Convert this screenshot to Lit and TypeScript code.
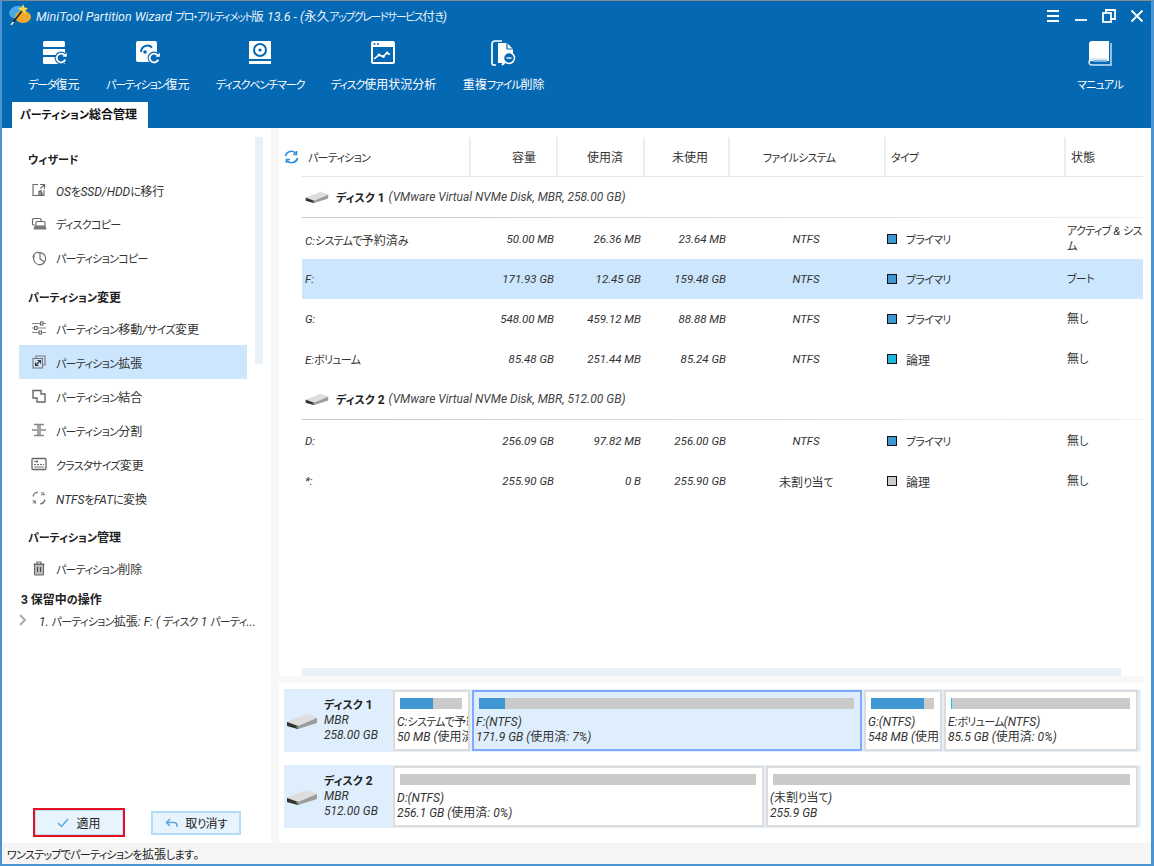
import { LitElement, html, css, svg } from "lit";
import { customElement } from "lit/decorators.js";

// kana is set narrower than kanji, like the UI font of the app
const kana = (s: string) =>
  s.split(/([\u3040-\u30ff]+)/).map((p, i) => (i % 2 ? html`<span class="k">${p}</span>` : p));
// latin runs are italic in this app, the japanese stays upright
const jp = (s: string) =>
  s.split(/([\x20-\x7e]+)/).map((p, i) => (i % 2 ? html`<i>${p}</i>` : kana(p)));

const tb = (body: unknown, w = 26, h = 26) =>
  html`<svg width=${w} height=${h} viewBox="0 0 26 26">${body}</svg>`;
const side = (body: unknown) =>
  html`<svg class="ic" width="16" height="16" viewBox="0 0 16 16" fill="none" stroke="#666" stroke-width="1.1">${body}</svg>`;

const redo = (x: number, y: number) => svg`
  <circle cx=${x} cy=${y} r="6.4" fill="#0568b3"/>
  <path d="M${x + 3.6} ${y - 2.6}A4.4 4.4 0 1 0 ${x + 4.2} ${y + 1.6}" fill="none" stroke="#fff" stroke-width="1.9"/>
  <path d="M${x + 1.6} ${y - 1.2}h4.2v-4z" fill="#fff"/>`;

const toolbar = [
  {
    label: "データ復元",
    icon: tb(svg`
      <rect x="2" y="1" width="22" height="6" rx="1.5" fill="#fff"/>
      <rect x="2" y="9" width="22" height="6" fill="#fff"/>
      <rect x="2" y="17" width="22" height="7" rx="1" fill="#fff"/>
      ${redo(20, 18)}`),
  },
  {
    label: "パーティション復元",
    icon: tb(svg`
      <rect x="1" y="1" width="21" height="21" rx="2" fill="#fff"/>
      <path d="M6 12a6.500 6.500 0 0 1 11-4.500" fill="none" stroke="#0568b3" stroke-width="2"/>
      <circle cx="10" cy="12" r="1.800" fill="#0568b3"/>
      ${redo(19, 18)}`),
  },
  {
    label: "ディスクベンチマーク",
    icon: tb(svg`
      <path d="M3 1h20a1 1 0 0 1 1 1v17H2V2a1 1 0 0 1 1-1z" fill="#fff"/>
      <circle cx="13" cy="10" r="6" fill="none" stroke="#0568b3" stroke-width="2"/>
      <circle cx="13" cy="10" r="1.600" fill="#0568b3"/>
      <rect x="2" y="21" width="22" height="3" fill="#fff"/>`),
  },
  {
    label: "ディスク使用状況分析",
    icon: tb(svg`
      <rect x="1" y="1" width="24" height="23" rx="2" fill="#fff"/>
      <rect x="3" y="7" width="20" height="15" fill="#0568b3"/>
      <circle cx="4.500" cy="4" r="1" fill="#0568b3"/><circle cx="8" cy="4" r="1" fill="#0568b3"/>
      <path d="M4 19l5-4 4 1.500 4-3.500 3 1.500" fill="none" stroke="#fff" stroke-width="1.600"/>
      <circle cx="9" cy="15" r="1.400" fill="#fff"/><circle cx="13.500" cy="16.500" r="1.400" fill="#fff"/><circle cx="17" cy="13" r="1.400" fill="#fff"/>`),
  },
  {
    label: "重複ファイル削除",
    icon: tb(svg`
      <path d="M5 25H3a2 2 0 0 1-2-2V4a3 3 0 0 1 3-3h7" fill="none" stroke="#fff" stroke-width="1.700"/>
      <path d="M7 3h9l6 6v14H7z" fill="#fff"/>
      <path d="M16 3v6h6" fill="none" stroke="#0568b3" stroke-width="1.200"/>
      <circle cx="18" cy="18" r="5.500" fill="#0568b3" stroke="#fff" stroke-width="1.500"/>
      <path d="M15.500 18h5" stroke="#fff" stroke-width="1.400"/>
      <path d="M14 22l-3 3" stroke="#fff" stroke-width="2"/>`),
  },
];

const groups = [
  {
    title: "ウィザード",
    items: [
      { label: "OSをSSD/HDDに移行", icon: side(svg`<path d="M7 2.500H2v11h11V8"/><path d="M9 2.500h4.500V7M13 3L9.500 6.500"/><path d="M8 13V9.500l2-.5v4M11 13v-2.500" stroke-width="1.400"/>`) },
      { label: "ディスクコピー", icon: side(svg`<path d="M4 9H2.500a1 1 0 0 1-1-1V3.500a1 1 0 0 1 1-1H9a1 1 0 0 1 1 1V5"/><path d="M6 5.500h7a1 1 0 0 1 1 1V10H5V6.500a1 1 0 0 1 1-1z"/><path d="M3.500 10h11l1 3.500H2.500z" fill="#777" stroke="none"/>`) },
      { label: "パーティションコピー", icon: side(svg`<path d="M3.500 5.500A6 6 0 1 0 6.500 3"/><path d="M9 9V3.200M9 9l4.500 3"/><path d="M2 8a6 6 0 0 1 5-6"/>`) },
    ],
  },
  {
    title: "パーティション変更",
    items: [
      { label: "パーティション移動/サイズ変更", icon: side(svg`<path d="M1 3.500h14M1 8h14M1 12.500h14" stroke="#888"/><rect x="9.500" y="2" width="2.500" height="3" fill="#fff"/><rect x="3.500" y="6.500" width="2.500" height="3" fill="#fff"/><rect x="8" y="11" width="2.500" height="3" fill="#fff"/>`) },
      { label: "パーティション拡張", sel: true, icon: side(svg`<path d="M5 4.500V2h9v9h-2.500" stroke="#777"/><rect x="2" y="4.500" width="9.500" height="9.500" stroke="#777"/><path d="M5 11l4-4M6.500 6.500H9.500V9.500M4.500 8.500v3h3" stroke="#333"/>`) },
      { label: "パーティション結合", icon: side(svg`<path d="M2 2.500h8v3.500h4v8H6v-4H2z" stroke-width="1.400"/>`) },
      { label: "パーティション分割", icon: side(svg`<path d="M3 2.500h10M3 13.500h10M1 8h5M10 8h5M7 2.500v11M9 2.500v11" stroke="#888" stroke-width="1.500"/>`) },
      { label: "クラスタサイズ変更", icon: side(svg`<rect x="1" y="2.500" width="14" height="11" rx="1" stroke-width="1.300"/><path d="M3 8.500h10" stroke-dasharray="2 1"/><path d="M3 5.500h4M6 4v3M3 11h10" stroke="#777"/>`) },
      { label: "NTFSをFATに変換", icon: side(svg`<path d="M2 6.500A6 6 0 0 1 7 2M14 9.500A6 6 0 0 1 9 14"/><path d="M12 3.500l1.500 1.500M3 11l1.500 1.500"/><text x="10" y="6" font-size="5" font-family="Liberation Sans" fill="#555" stroke="none">F</text><text x="1.500" y="14" font-size="5" font-family="Liberation Sans" fill="#555" stroke="none">N</text>`) },
    ],
  },
  {
    title: "パーティション管理",
    items: [
      { label: "パーティション削除", icon: side(svg`<path d="M2.500 4h11M6 4V2h4v2"/><path d="M3.500 4.500h9V14a1 1 0 0 1-1 1h-7a1 1 0 0 1-1-1z" fill="#bbb"/><path d="M6.500 7v5M9.500 7v5" stroke="#444"/>`) },
    ],
  },
];

const table = [
  { disk: "ディスク 1", info: "(VMware Virtual NVMe Disk, MBR, 258.00 GB)" },
  { name: "C:システムで予約済み", size: "50.00 MB", used: "26.36 MB", free: "23.64 MB", fs: "NTFS", type: "プライマリ", color: "#3f98d4", state: "アクティブ & シス\nム" },
  { name: "F:", size: "171.93 GB", used: "12.45 GB", free: "159.48 GB", fs: "NTFS", type: "プライマリ", color: "#3f98d4", state: "ブート", sel: true },
  { name: "G:", size: "548.00 MB", used: "459.12 MB", free: "88.88 MB", fs: "NTFS", type: "プライマリ", color: "#3f98d4", state: "無し" },
  { name: "E:ボリューム", size: "85.48 GB", used: "251.44 MB", free: "85.24 GB", fs: "NTFS", type: "論理", color: "#1fb6e0", state: "無し" },
  { disk: "ディスク 2", info: "(VMware Virtual NVMe Disk, MBR, 512.00 GB)" },
  { name: "D:", size: "256.09 GB", used: "97.82 MB", free: "256.00 GB", fs: "NTFS", type: "プライマリ", color: "#3f98d4", state: "無し" },
  { name: "*:", size: "255.90 GB", used: "0 B", free: "255.90 GB", fs: "未割り当て", type: "論理", color: "#cccccc", state: "無し" },
];

const disks = [
  {
    name: "ディスク 1", kind: "MBR", size: "258.00 GB",
    parts: [
      { w: 77, used: 53, a: "C:システムで予約済み(NTFS)", b: "50 MB (使用済: 52%)" },
      { w: 390, used: 7, a: "F:(NTFS)", b: "171.9 GB (使用済: 7%)", sel: true },
      { w: 78, used: 84, a: "G:(NTFS)", b: "548 MB (使用済: 83%)" },
      { w: 194, used: 0.8, a: "E:ボリューム(NTFS)", b: "85.5 GB (使用済: 0%)", cyan: true },
    ],
  },
  {
    name: "ディスク 2", kind: "MBR", size: "512.00 GB",
    parts: [
      { w: 371, used: 0, a: "D:(NTFS)", b: "256.1 GB (使用済: 0%)" },
      { w: 372, used: 0, a: "(未割り当て)", b: "255.9 GB" },
    ],
  },
];

const hdd = (w: number, h: number) => html`<svg class="hdd" width=${w} height=${h} viewBox="0 0 32 18">
  <path d="M1 10L21 3l10 3v5L12 17 1 14z" fill="#9c9c9c"/>
  <path d="M1 10l11 4 19-8-10-4z" fill="#dedede"/>
  <path d="M1 10l11 4v3L1 14z" fill="#333"/>
  <circle cx="11" cy="15" r="0.900" fill="#4caf50"/>
</svg>`;

@customElement("app-root")
export class AppRoot extends LitElement {
  static styles = css`
    :host {
      display: block;
      width: 1154px;
      height: 866px;
      box-sizing: border-box;
      border-top: 1px solid #7f8c96;
      border-left: 2px solid #4a94d2;
      border-right: 3px solid #4a94d2;
      border-bottom: 2px solid #4a94d2;
      background: #fff;
      overflow: hidden;
      font-family: "Roboto", "Noto Sans CJK JP", sans-serif;
      font-feature-settings: "palt";
      font-size: 12px;
      color: #222;
      display: flex;
      flex-direction: column;
    }
    i { font-style: italic; }
    svg { display: block; flex: none; }
    .k { font-size: 11px; letter-spacing: -0.7px; }

    .head { background: #0568b3; height: 127px; flex: none; color: #fff; display: flex; flex-direction: column; }
    .titlebar { display: flex; align-items: center; height: 28px; padding-left: 6px; gap: 4px; }
    .title { flex: 1; font-size: 12.500px; color: #e8f2fa; }
    .title .k { letter-spacing: -1.500px; }
    .controls { display: flex; gap: 10px; padding: 2px 5px 0 0; }
    .controls svg { width: 18px; height: 18px; }
    .tools { display: flex; height: 73px; gap: 26.500px; padding-left: 26px; padding-top: 11px; box-sizing: border-box; }
    .tool { display: flex; flex-direction: column; align-items: center; gap: 10px; }
    .tool .lbl { white-space: nowrap; line-height: 18px; }
    .tool .lbl .k { letter-spacing: -1.100px; }
    .tool.manual { margin-left: auto; margin-right: 28px; }
    .tool.manual .lbl .k { letter-spacing: -0.700px; }
    .tabs { flex: 1; display: flex; align-items: flex-end; padding-left: 10px; }
    .tab { background: #fff; color: #111; font-weight: 700; height: 26px; line-height: 26px; padding: 0 11px 0 8px; font-size: 12px; }
    .tab .k, .group .k, .pending .k, b .k { letter-spacing: 0; }

    .body { flex: 1; min-height: 0; display: flex; }
    .sidebar { width: 269px; flex: none; display: flex; padding: 9px 8px 6px 0; box-sizing: border-box; }
    .nav { flex: 1; min-width: 0; display: flex; flex-direction: column; padding-top: 10px; }
    .track { width: 8px; height: 227px; background: #e8f0f8; flex: none; }
    .group { font-weight: 700; padding-left: 26px; height: 26px; line-height: 26px; color: #222; }
    .item { display: flex; align-items: center; height: 34px; margin-left: 17px; width: 228px; padding-left: 12px; gap: 9px; box-sizing: border-box; color: #333; }
    .item.sel { background: #cce6fd; }
    .groupbox { display: flex; flex-direction: column; margin-bottom: 10px; }
    .pending { font-weight: 700; padding-left: 19px; line-height: 18px; margin-top: -4px; }
    .pending-row { display: flex; align-items: center; padding-left: 16px; height: 20px; gap: 11px; color: #333; white-space: nowrap; }
    .actions { margin-top: auto; display: flex; align-items: center; gap: 26px; padding-left: 31px; }
    .btn { display: flex; align-items: center; justify-content: center; gap: 7px; box-sizing: border-box; background: #e8f4fd; border: 2px solid #b3dcf7; height: 24px; width: 90px; color: #222; }
    .btn.apply { width: 92px; height: 29px; border: 2px solid #e81123; box-shadow: inset 0 0 0 1px #b3dcf7; }

    .gutter { width: 8px; background: #f8f8f8; flex: none; }
    .main { flex: 1; min-width: 0; display: flex; flex-direction: column; padding-top: 9px; }
    .list { flex: 1; min-height: 0; padding-left: 23px; margin-right: 8px; display: flex; flex-direction: column; }
    .cols { display: grid; grid-template-columns: 167px 87px 87px 85px 156px 180px 79px; }
    .thead { height: 40px; border-bottom: 1px solid #e6e6e6; box-sizing: border-box; flex: none; }
    .th { display: flex; align-items: center; height: 39px; border-left: 2px solid #ededed; box-sizing: border-box; color: #333; }
    .th:first-child { border-left: 0; padding-left: 6px; }
    .th.r { justify-content: flex-end; padding-right: 20px; }
    .th.c { justify-content: center; padding-right: 16px; }
    .th.l { padding-left: 5px; }
    .refresh { margin-left: -24px; margin-right: 9px; }
    .diskrow { display: flex; align-items: center; height: 41px; box-sizing: border-box; gap: 4px; padding-left: 3px; border-bottom: 1px solid; border-image: linear-gradient(90deg, #c8c8c8, #f0f0f0) 1; flex: none; }
    .diskrow .hdd { margin-right: 3px; }
    .diskrow b { color: #222; }
    .diskrow em { color: #444; font-style: italic; }
    .diskrow + .row { margin-top: 1px; }
    .row { height: 40px; align-items: center; flex: none; color: #333; }
    .row.sel { background: #cce6fd; }
    .row > div { min-width: 0; }
    .row i { font-size: 11.500px; }
    .row .n { padding-left: 3px; }
    .row .r { text-align: right; padding-right: 2px; }
    .row .c { text-align: center; }
    .row .t { display: flex; align-items: center; gap: 9px; padding-left: 3px; }
    .sq { width: 8px; height: 8px; border: 1px solid #111; flex: none; }
    .row .s { padding-left: 3px; line-height: 15px; white-space: pre; }
    .hscroll { height: 8px; background: #e8f0f8; margin-right: 22px; flex: none; }
    .hgap { height: 7px; margin: 0 8px 0 0; background: #f8f8f8; flex: none; }
    .map { flex: none; height: 160px; box-sizing: border-box; padding: 6px 10px 0 5px; display: flex; flex-direction: column; gap: 13px; }
    .disk { display: flex; height: 63px; background: #e3f0fb; border-radius: 3px; padding-right: 3px; align-items: stretch; gap: 2px; }
    .dlabel { width: 107px; flex: none; display: flex; align-items: center; gap: 6px; padding-left: 2px; box-sizing: border-box; line-height: 15px; background: #deeefc; }
    .dlabel em { font-style: italic; display: block; color: #333; }
    .dlabel b { display: block; }
    .part { box-sizing: border-box; background: #fff; border: 2px solid #dcdcdc; margin: 1px 0; padding: 6px 6px 0 2px; overflow: hidden; white-space: nowrap; line-height: 15px; color: #333; flex: none; }
    .part.sel { background: #deeefc; border-color: #80a8ff; }
    .bar { height: 11px; background: #cacaca; margin: 0 0 6px 3px; display: flex; }
    .bar span { background: #3f98d4; display: block; }
    .bar span.cyan { background: #17c5e8; }

    .status { height: 21px; flex: none; background: #f5f5f5; line-height: 25px; padding-left: 5px; color: #222; }
  `;

  render() {
    return html`
      <div class="head">
        <div class="titlebar">
          <svg width="24" height="24" viewBox="0 0 24 24">
            <ellipse cx="9" cy="9" rx="8" ry="6" fill="#4aa8e8" transform="rotate(-20 9 9)"/>
            <ellipse cx="15" cy="14" rx="8" ry="6" fill="#f0a92e"/>
            <path d="M15 1l1.500 3.500 3.500.5-2.500 2.500.5 3.500-3-1.700-3 1.700.5-3.500L10 5l3.500-.5z" fill="#f7d64a"/>
            <path d="M3 22L14 8" stroke="#222" stroke-width="1.600"/>
            <path d="M3 22l2.500-3" stroke="#eee" stroke-width="1.600"/>
          </svg>
          <div class="title">${jp("MiniTool Partition Wizard プロ・アルティメット版 13.6 - (永久アップグレードサービス付き)")}</div>
          <div class="controls">
            <svg viewBox="0 0 18 18" fill="none" stroke="#fff" stroke-width="1.800"><path d="M3 4h12M3 9h12M3 14h12"/></svg>
            <svg viewBox="0 0 18 18" fill="none" stroke="#fff" stroke-width="1.800"><path d="M3 13h12"/></svg>
            <svg viewBox="0 0 18 18" fill="none" stroke="#fff" stroke-width="1.800"><rect x="3" y="6" width="8" height="9"/><path d="M6 6V3h9v9h-4"/></svg>
            <svg viewBox="0 0 18 18" fill="none" stroke="#fff" stroke-width="1.800"><path d="M3.500 3.500l11 11M14.500 3.500l-11 11"/></svg>
          </div>
        </div>
        <div class="tools">
          ${toolbar.map((t) => html`<div class="tool">${t.icon}<span class="lbl">${kana(t.label)}</span></div>`)}
          <div class="tool manual">
            ${tb(svg`
              <path d="M5 1h17v20H5a3 3 0 0 0-3 3V4a3 3 0 0 1 3-3z" fill="#fff"/>
              <path d="M24 3v22H5a3 3 0 0 1-3-3 3 3 0 0 1 3-3h16" fill="none" stroke="#cfe4f5" stroke-width="1.400"/>
              <rect x="6" y="20" width="14" height="2" fill="#7db5e0"/>`)}
            <span class="lbl">${kana("マニュアル")}</span>
          </div>
        </div>
        <div class="tabs"><div class="tab">${kana("パーティション総合管理")}</div></div>
      </div>

      <div class="body">
        <div class="sidebar">
          <div class="nav">
            ${groups.map((g) => html`
              <div class="groupbox">
                <div class="group">${kana(g.title)}</div>
                ${g.items.map((it: any) => html`
                  <div class="item ${it.sel ? "sel" : ""}">${it.icon}<span>${jp(it.label)}</span></div>`)}
              </div>`)}
            <div class="pending">${kana("3 保留中の操作")}</div>
            <div class="pending-row">
              <svg width="10" height="12" viewBox="0 0 10 12" fill="none" stroke="#aaa" stroke-width="2"><path d="M2 1l5 5-5 5"/></svg>
              <span>${jp("1. パーティション拡張: F: ( ディスク 1 パーティ...")}</span>
            </div>
            <div class="actions">
              <div class="btn apply">
                <svg width="12" height="10" viewBox="0 0 12 10" fill="none" stroke="#5aa7e0" stroke-width="1.500"><path d="M1 5l3.500 3.500L11 1"/></svg>
                適用
              </div>
              <div class="btn">
                <svg width="13" height="10" viewBox="0 0 13 10" fill="none" stroke="#5aa7e0" stroke-width="1.500"><path d="M5 1L1.500 4.500 5 8M2 4.500h7a3 3 0 0 1 3 3V9"/></svg>
                <span>${kana("取り消す")}</span>
              </div>
            </div>
          </div>
          <div class="track"></div>
        </div>
        <div class="gutter"></div>

        <div class="main">
          <div class="list">
            <div class="cols thead">
              <div class="th">
                <svg class="refresh" width="15" height="14" viewBox="0 0 15 14" fill="none" stroke="#2f8fe0" stroke-width="1.700">
                  <path d="M1.500 6A6 6 0 0 1 12 3.500M13.500 8A6 6 0 0 1 3 10.500"/>
                  <path d="M12.500 1v3.500H9M2.500 13V9.500H6"/>
                </svg>
                <span>${kana("パーティション")}</span>
              </div>
              <div class="th r">容量</div>
              <div class="th r">使用済</div>
              <div class="th r">未使用</div>
              <div class="th c"><span>${kana("ファイルシステム")}</span></div>
              <div class="th l"><span>${kana("タイプ")}</span></div>
              <div class="th l">状態</div>
            </div>
            ${table.map((r: any) =>
              r.disk
                ? html`<div class="diskrow">${hdd(24, 14)}<b>${kana(r.disk)}</b><em>${r.info}</em></div>`
                : html`<div class="cols row ${r.sel ? "sel" : ""}">
                    <div class="n">${jp(r.name)}</div>
                    <div class="r"><i>${r.size}</i></div>
                    <div class="r"><i>${r.used}</i></div>
                    <div class="r"><i>${r.free}</i></div>
                    <div class="c">${jp(r.fs)}</div>
                    <div class="t"><span class="sq" style="background:${r.color}"></span><span>${kana(r.type)}</span></div>
                    <div class="s">${jp(r.state)}</div>
                  </div>`
            )}
            <div style="flex:1"></div>
            <div class="hscroll"></div>
          </div>
          <div class="hgap"></div>
          <div class="map">
            ${disks.map((d) => html`
              <div class="disk">
                <div class="dlabel">
                  ${hdd(32, 18)}
                  <div><b>${kana(d.name)}</b><em>${d.kind}</em><em>${d.size}</em></div>
                </div>
                ${d.parts.map((p: any) => html`
                  <div class="part ${p.sel ? "sel" : ""}" style="width:${p.w}px">
                    <div class="bar"><span class=${p.cyan ? "cyan" : ""} style="width:${p.used}%"></span></div>
                    <div>${jp(p.a)}</div>
                    <div>${jp(p.b)}</div>
                  </div>`)}
              </div>`)}
          </div>
        </div>
      </div>

      <div class="status">${kana("ワンステップでパーティションを拡張します。")}</div>
    `;
  }
}
